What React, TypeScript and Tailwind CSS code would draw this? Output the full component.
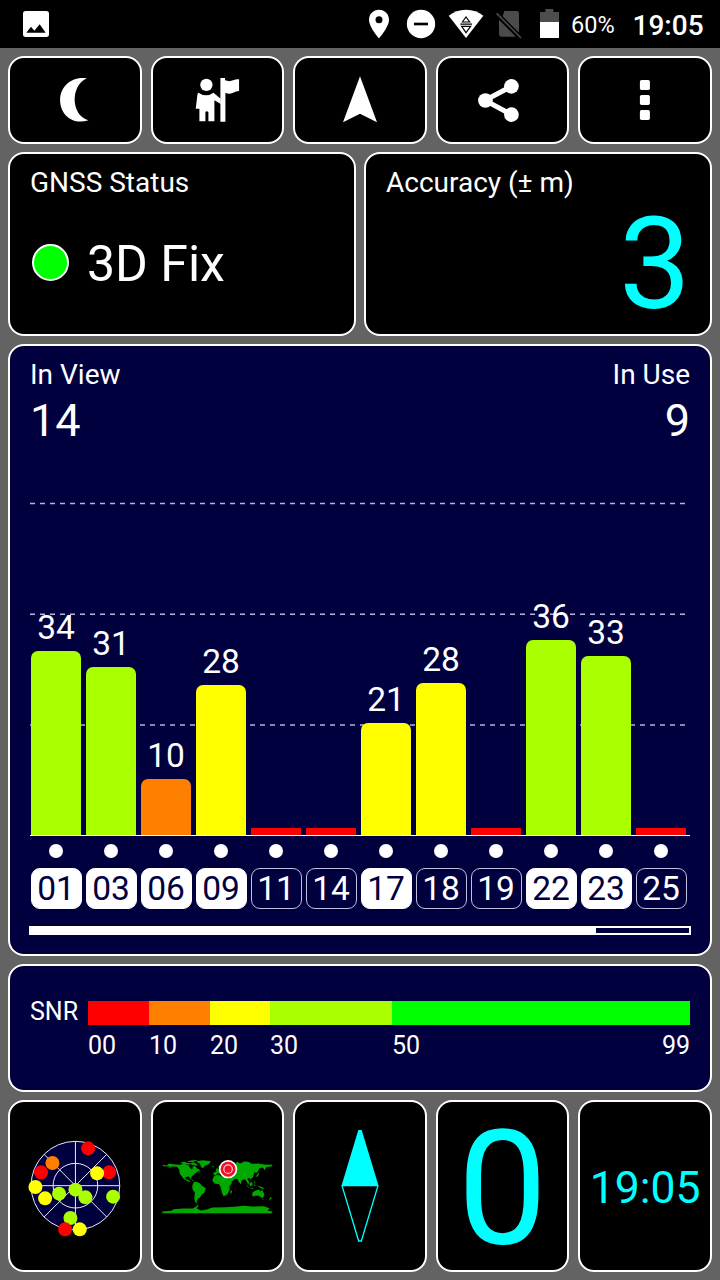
import React from "react";

type Sat = { id: string; height: number; snr?: number; color: string; used: boolean };

const LIME = "bg-[#aaff00]";
const YELLOW = "bg-[#ffff00]";
const ORANGE = "bg-[#ff8000]";
const RED = "bg-[#ff0000]";

const sats: Sat[] = [
  { id: "01", height: 184, snr: 34, color: LIME, used: true },
  { id: "03", height: 168, snr: 31, color: LIME, used: true },
  { id: "06", height: 56, snr: 10, color: ORANGE, used: true },
  { id: "09", height: 150, snr: 28, color: YELLOW, used: true },
  { id: "11", height: 7, color: RED, used: false },
  { id: "14", height: 7, color: RED, used: false },
  { id: "17", height: 112, snr: 21, color: YELLOW, used: true },
  { id: "18", height: 152, snr: 28, color: YELLOW, used: false },
  { id: "19", height: 7, color: RED, used: false },
  { id: "22", height: 195, snr: 36, color: LIME, used: true },
  { id: "23", height: 179, snr: 33, color: LIME, used: true },
  { id: "25", height: 7, color: RED, used: false },
];

const tile = "flex items-center justify-center rounded-[16px] border-2 border-white bg-black";

function StatusBar() {
  return (
    <header className="flex h-12 shrink-0 items-center bg-black pl-5">
      <svg className="h-8 w-8" viewBox="60 24 96 96">
        <path
          fill="#fff"
          fillRule="evenodd"
          d="M77 33H139Q147 33 147 41V103Q147 111 139 111H77Q69 111 69 103V41Q69 33 77 33ZM79 98H137L119 73L103 92L93 80Z"
        />
      </svg>
      <div className="ml-auto flex items-center">
        <svg className="h-8 w-8" viewBox="9 24 96 96">
          <path
            fill="#fff"
            fillRule="evenodd"
            d="M57 29C40 29 27 42 27 59C27 81 57 115 57 115S87 81 87 59C87 42 74 29 57 29ZM57 48.500A10.500 10.500 0 1 1 57 69.500A10.500 10.500 0 1 1 57 48.500Z"
          />
        </svg>
        <svg className="ml-[10px] h-8 w-8" viewBox="135 24 96 96">
          <circle cx="183" cy="72" r="42.500" fill="#fff" />
          <rect x="162" y="68" width="42" height="8" fill="#000" />
        </svg>
        <svg className="ml-[11px] h-8 w-9" viewBox="264 24 108 96">
          <path fill="#fff" d="M266 47Q288 29 318 29T370 47L318 114Z" />
          <path fill="none" stroke="#000" strokeWidth="3.500" d="M307 66L318 51L329 66ZM301 72.500H336M305 79H332L318 98Z" />
        </svg>
        <svg className="ml-[11px] h-8 w-7" viewBox="405 24 84 96">
          <path fill="#4b4b4b" d="M433 33H470Q477 33 477 40V98L428 49ZM417 59L468 110H424Q417 110 417 103Z" />
          <path fill="none" stroke="#4b4b4b" strokeWidth="5" d="M410 40L483 114" />
        </svg>
        <svg className="ml-[16px] h-8 w-[21px]" viewBox="537 24 63 96">
          <path fill="#4d4d4d" d="M540 67V36H556V27H580V36H597V67Z" />
          <path fill="#fff" d="M540 66H597V114H540Z" />
        </svg>
        <span className="ml-[11px] mt-[2px] w-[61.5px] text-[23.5px] leading-6">60%</span>
        <span className="mt-[3px] w-[87.5px] text-[28px] font-medium leading-7">19:05</span>
      </div>
    </header>
  );
}

function Toolbar() {
  return (
    <nav className="grid h-[88px] shrink-0 grid-cols-5 gap-[8.75px]">
      <button className={tile} aria-label="Night mode">
        <svg className="h-[60px] w-[60px]" viewBox="134.700 210 180 180">
          <path fill="#fff" d="M260 235C214 228 180 260 180 300C180 345 218 376 265 361C212 346 210 258 260 235Z" />
        </svg>
      </button>
      <button className={tile} aria-label="Guide">
        <svg className="h-[60px] w-[60px]" viewBox="562.800 210 180 180">
          <g fill="#fff">
            <circle cx="621" cy="254.500" r="18.500" />
            <path d="M597 278Q621 294 642 278L664 296V312L645 301V364H627V336Q622 331 618 336V364H600V326H589L594 284Q595 279 597 278Z" />
            <path d="M663 234H677V241Q690 246 701 241T719 238V273Q710 273 701 278Q689 284 678 278V365H663Z" />
          </g>
        </svg>
      </button>
      <button className={tile} aria-label="Navigate">
        <svg className="h-[60px] w-[60px]" viewBox="-90 210 180 180">
          <path fill="#fff" d="M0 229L51 367L0 341L-51 367Z" />
        </svg>
      </button>
      <button className={tile} aria-label="Share">
        <svg className="h-[60px] w-[60px]" viewBox="338.700 210 180 180">
          <path fill="none" stroke="#fff" strokeWidth="15" d="M454 259L375 301L454 344" />
          <g fill="#fff">
            <circle cx="454" cy="259" r="22" />
            <circle cx="376" cy="301.500" r="22" />
            <circle cx="454" cy="344" r="22" />
          </g>
        </svg>
      </button>
      <button className={tile} aria-label="More">
        <svg className="h-[60px] w-[60px]" viewBox="765.300 210 180 180">
          <g fill="#fff">
            <rect x="840" y="240" width="30" height="30" rx="5" />
            <rect x="840" y="285" width="30" height="30" rx="5" />
            <rect x="840" y="330" width="30" height="30" rx="5" />
          </g>
        </svg>
      </button>
    </nav>
  );
}

function Chart() {
  return (
    <div className="relative mt-[2px] h-[390px]">
      <svg className="absolute inset-0 h-[390px] w-[660px]" viewBox="0 0 660 390">
        <path
          fill="none"
          stroke="#b4b4dc"
          strokeWidth="1.400"
          strokeDasharray="5 5"
          d="M0 57.500H656M0 168.300H656M0 279H656"
        />
      </svg>
      <div className="relative flex h-[390px] items-end gap-[5px] border-b border-white pl-px">
        {sats.map((s) => (
          <div key={s.id} className="flex w-[50px] flex-col items-center">
            {s.snr !== undefined && <span className="mb-[6px] text-[33.5px] leading-[34px]">{s.snr}</span>}
            <div
              className={`w-[50px] shrink-0 ${s.snr !== undefined ? "rounded-t-[7px]" : ""} ${s.color}`}
              style={{ height: s.height }}
            />
          </div>
        ))}
      </div>
    </div>
  );
}

function SatellitePanel() {
  return (
    <section className="h-[612px] shrink-0 rounded-[16px] border-2 border-white bg-[#00003f] px-5 pt-[15px]">
      <div className="flex justify-between">
        <div>
          <div className="text-[28px] leading-7">In View</div>
          <div className="mt-[9px] text-[45px] leading-[46px]">14</div>
        </div>
        <div className="text-right">
          <div className="text-[28px] leading-7">In Use</div>
          <div className="mt-[9px] text-[45px] leading-[46px]">9</div>
        </div>
      </div>
      <Chart />
      <div className="mt-2 flex gap-[5px] pl-px">
        {sats.map((s) => (
          <div key={s.id} className="flex w-[50px] justify-center">
            <span className="h-[14px] w-[14px] rounded-full bg-white" />
          </div>
        ))}
      </div>
      <div className="mt-[10px] flex gap-1 pl-[0.5px]">
        {sats.map((s) => (
          <div
            key={s.id}
            className={`flex h-[41px] w-[51px] items-center justify-center rounded-[9px] border pt-px text-[33.5px] leading-[34px] ${
              s.used ? "border-white bg-white text-[#00003f]" : "border-[#c0c0dc] text-white"
            }`}
          >
            {s.id}
          </div>
        ))}
      </div>
      <div className="-mx-px mt-[17px] h-[9px] border-2 border-white">
        <div className="h-full w-[565px] bg-white" />
      </div>
    </section>
  );
}

function SnrPanel() {
  return (
    <section className="flex h-32 shrink-0 rounded-[16px] border-2 border-white bg-[#00003f] px-5 pt-[35px] text-[25px] leading-6">
      <span className="-mt-px w-[58px]">SNR</span>
      <div className="w-[602px]">
        <div className="flex h-6">
          <div className="w-[61px] bg-[#ff0000]" />
          <div className="w-[61px] bg-[#ff8000]" />
          <div className="w-[60px] bg-[#ffff00]" />
          <div className="w-[122px] bg-[#aaff00]" />
          <div className="flex-1 bg-[#00ff00]" />
        </div>
        <div className="mt-[9px] flex">
          <span className="w-[61px]">00</span>
          <span className="w-[61px]">10</span>
          <span className="w-[60px]">20</span>
          <span className="w-[122px]">30</span>
          <span className="flex-1">50</span>
          <span>99</span>
        </div>
      </div>
    </section>
  );
}

const skyDots: [number, number, string][] = [
  [234, 85, "#ff0000"],
  [297, 157, "#ff0000"],
  [261, 160, "#ffff00"],
  [93, 157, "#ff0000"],
  [127, 129, "#ff8000"],
  [76, 201, "#ffff00"],
  [105, 235, "#ffff00"],
  [147, 221, "#aaff00"],
  [226, 232, "#aaff00"],
  [196, 209, "#aaff00"],
  [309, 230, "#aaff00"],
  [181, 294, "#aaff00"],
  [165, 328, "#ff0000"],
  [209, 328, "#ffff00"],
];

function SkyPlot() {
  return (
    <svg className="h-[100px] w-[100px] overflow-visible" viewBox="44.700 48 300 300">
      <g stroke="#e8e8ff" strokeWidth="3">
        <circle cx="196" cy="197" r="133" fill="#00003f" />
        <circle cx="196" cy="197" r="67" fill="none" />
        <path fill="none" d="M196 64V330M63 197H329M102 103L290 291M102 291L290 103" />
      </g>
      {skyDots.map(([x, y, c]) => (
        <circle key={`${x}-${y}`} cx={x} cy={y} r="21" fill={c} />
      ))}
    </svg>
  );
}

function WorldMap() {
  return (
    <svg className="h-[60px] w-[120px]" viewBox="22.300 47.500 360 180">
      <g fill="#00a800">
        <path d="M38 74L52 76L57 71L78 73L92 74L104 71L118 76L122 84L128 88L130 78L138 78L142 84L153 90L144 94L138 99L132 104L126 109L123 118L118 109L107 111L108 118L115 118L122 124L126 126L118 125L104 118L96 108L90 99L89 88L82 80L68 79L54 85L61 79L42 78Z" />
        <path d="M92 67L104 65L112 68L124 70L130 66L140 71L145 77L136 76L126 73L112 73L98 71ZM110 63L130 60L146 60L136 64L126 66ZM122 116L134 121L130 122ZM143 96L154 93L150 97Z" />
        <path d="M142 63L160 60L184 63L178 72L167 76L160 84L154 80L151 70L144 67Z" />
        <path d="M132 126L141 125L152 130L157 137L169 144L164 158L156 164L151 173L145 175L141 183L144 189L137 186L134 174L136 158L129 148L128 138Z" />
        <path d="M193 108L206 103L214 108L234 109L240 121L248 127L240 138L240 150L232 164L222 168L217 158L213 140L208 132L195 130L188 121ZM241 155L248 149L245 162Z" />
        <path d="M192 104V97L201 95L197 92L208 87L206 80L216 72L226 70L240 76L258 71L262 65L272 70L284 64L296 65L306 71L326 70L344 73L368 74V78L350 81L345 90L340 82L330 84L326 92L322 98L314 97L310 112L302 117L299 113L293 116L299 126L296 134L290 122L285 117L276 120L274 132L268 126L264 117L256 115L250 122L241 126L236 112L238 107L226 106L219 102L212 99L202 100L199 105Z" />
        <path d="M199 90L202 82L206 89ZM186 79L194 78L192 82ZM238 63L248 60L242 66ZM318 110L325 101L329 96L326 108ZM312 118L315 124L318 132L314 128ZM287 129L298 141L296 143ZM299 130L308 125L309 135L302 138ZM298 143L312 145L311 147ZM312 132L318 135L315 139ZM323 136L340 142L344 147L333 144Z" />
        <path d="M308 158L319 150L328 149L334 154L337 148L345 164L339 174L328 167L316 167L309 170ZM338 176L342 177L340 180ZM363 170L367 174L357 182Z" />
        <path d="M38 214L66 212L72 207L100 205L130 205L140 199L145 194L147 198L141 204L153 211L172 208L188 202L228 201L262 199L282 197L308 199L342 198L360 204L354 211L368 214V219H38Z" />
      </g>
      <circle cx="235.500" cy="87" r="27.500" fill="#fff" />
      <circle cx="235.500" cy="87" r="18.500" fill="#ffd0d0" stroke="#f01028" strokeWidth="8" />
      <circle cx="235.500" cy="87" r="11" fill="#f01028" />
    </svg>
  );
}

export default function App() {
  return (
    <div className="flex h-[1280px] w-[720px] flex-col overflow-hidden bg-[#636363] font-['Roboto',sans-serif] text-white">
      <StatusBar />
      <main className="flex flex-1 flex-col gap-2 p-2">
        <Toolbar />
        <div className="grid h-[184px] shrink-0 grid-cols-2 gap-2">
          <section className="rounded-[16px] border-2 border-white bg-black px-5 pt-[15px]">
            <div className="text-[28px] leading-7">GNSS Status</div>
            <div className="mt-[42px] flex pl-[2px]">
              <span className="mt-[5px] h-[37px] w-[37px] rounded-full border-2 border-white bg-[#00ff00]" />
              <span className="ml-[18px] text-[50px] leading-[50px]">3D Fix</span>
            </div>
          </section>
          <section className="rounded-[16px] border-2 border-white bg-black px-5 pt-[15px]">
            <div className="text-[28px] leading-7">Accuracy (± m)</div>
            <div className="-mr-px mt-[3px] text-right text-[128px] leading-[128px] text-[#00ffff]">3</div>
          </section>
        </div>
        <SatellitePanel />
        <SnrPanel />
        <div className="grid h-[172px] shrink-0 grid-cols-5 gap-[8.75px]">
          <div className={tile}>
            <SkyPlot />
          </div>
          <div className={tile}>
            <WorldMap />
          </div>
          <div className={tile}>
            <svg className="h-[120px] w-[60px]" viewBox="120 93 180 360">
              <path fill="#00ffff" d="M205 105H215L266 274H154Z" />
              <path fill="none" stroke="#00ffff" strokeWidth="4" d="M156 272L206 438H214L264 272" />
            </svg>
          </div>
          <div className={tile}>
            <span className="mt-[5px] text-[160px] leading-[160px] text-[#00ffff]">0</span>
          </div>
          <div className={tile}>
            <span className="mt-[4px] text-[44.5px] leading-[45px] text-[#00ffff]">19:05</span>
          </div>
        </div>
      </main>
    </div>
  );
}
